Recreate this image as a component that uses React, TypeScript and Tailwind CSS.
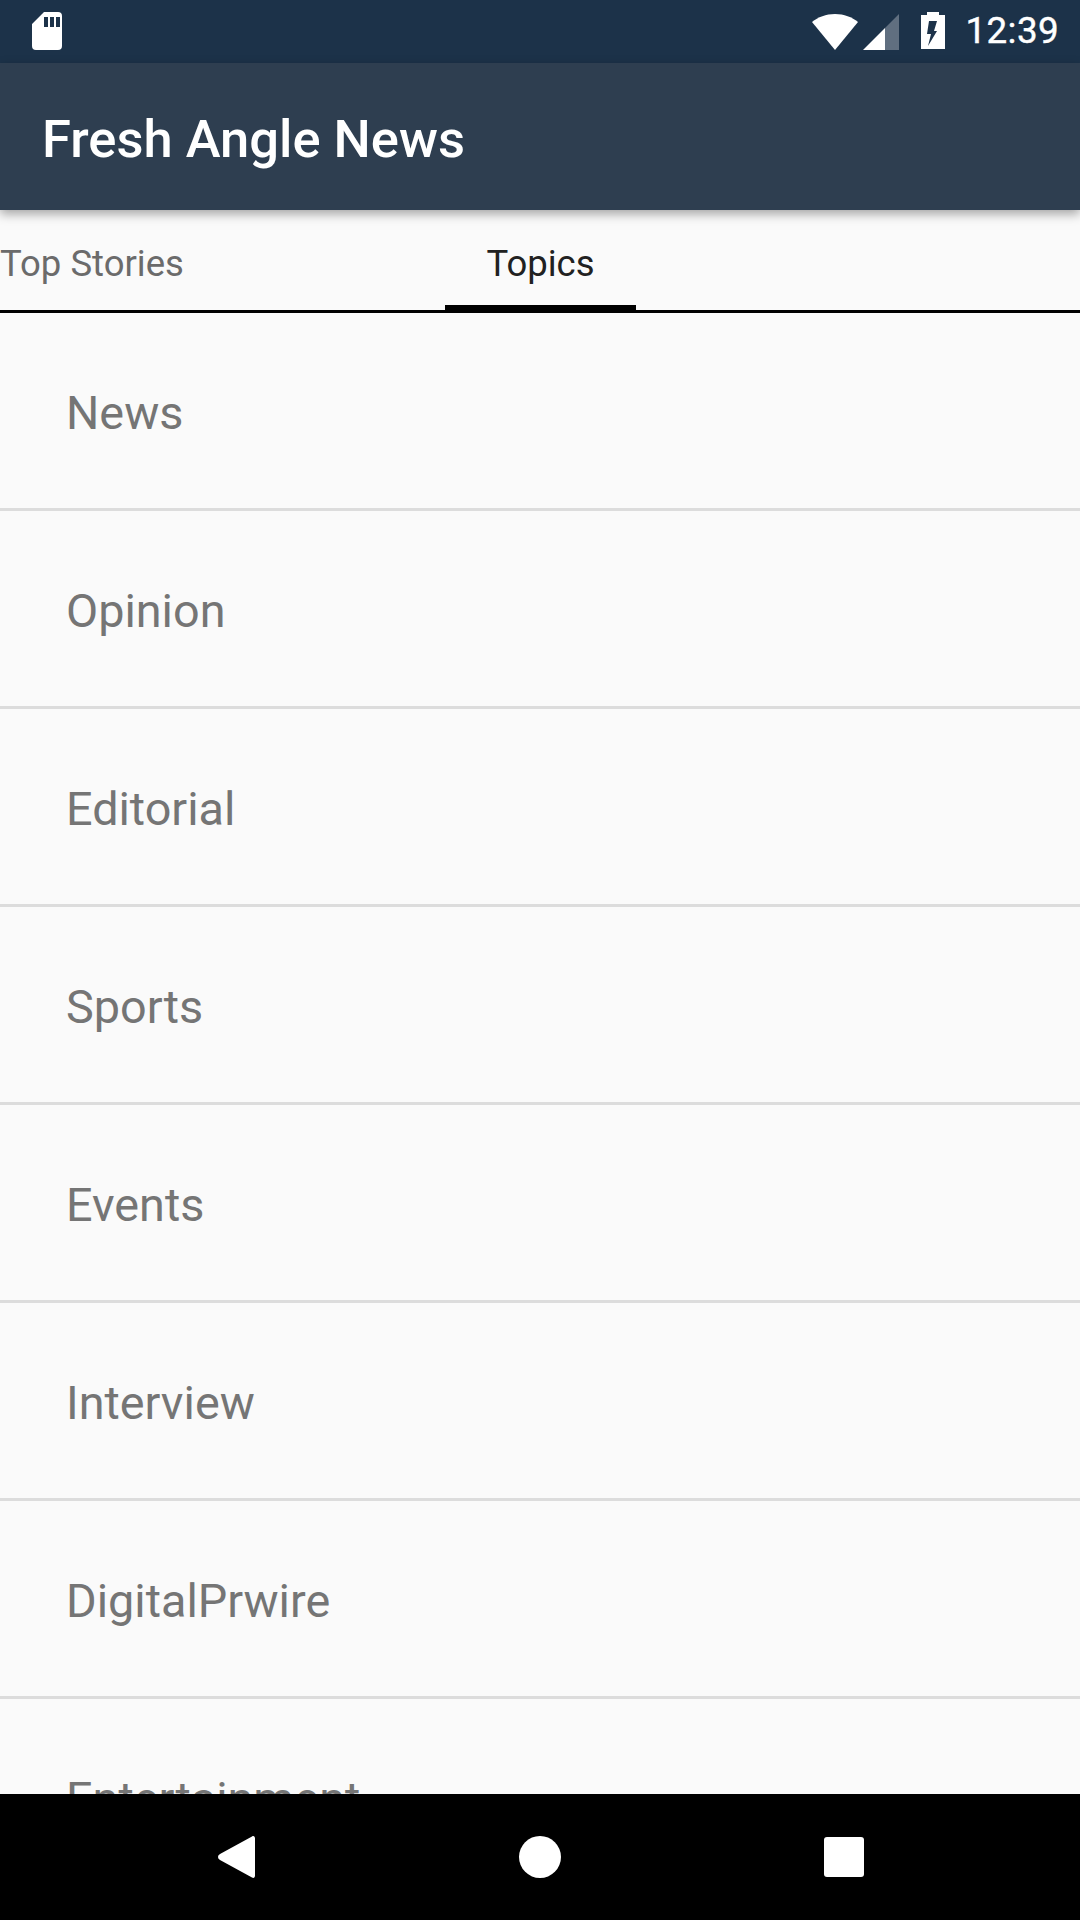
import React from 'react';

const topics = ['News', 'Opinion', 'Editorial', 'Sports', 'Events', 'Interview', 'DigitalPrwire', 'Entertainment'];

function StatusBar() {
  return (
    <div className="flex h-[63px] shrink-0 items-center bg-[#1c3249] pl-[32px] pr-[21px]">
      {/* sd card */}
      <svg width="30" height="38" viewBox="0 0 30 38" className="mb-[1px]">
        <path
          fill="#fff"
          fillRule="evenodd"
          d="M12 0h14a4 4 0 0 1 4 4v30a4 4 0 0 1-4 4H4a4 4 0 0 1-4-4V12zM12 5v10h4V5zM18 5v10h4V5zM24 5v10h4V5z"
        />
      </svg>
      <div className="flex-1" />
      {/* wifi */}
      <svg width="46" height="36" viewBox="0 0 46 36" className="mr-[5px]">
        <path fill="#fff" d="M23 0C14 0 6 3 0 8l23 28L46 8C40 3 32 0 23 0z" />
      </svg>
      {/* signal */}
      <svg width="36" height="36" viewBox="0 0 36 36" className="mr-[22px]">
        <path fill="#fff" fillOpacity="0.3" d="M36 0v36H22V14z" />
        <path fill="#fff" d="M22 14v22H0z" />
      </svg>
      {/* battery */}
      <svg width="24" height="37" viewBox="0 0 24 37" className="mb-[2px] mr-[20px]">
        <path
          fill="#fff"
          fillRule="evenodd"
          d="M6 0h12v3h6v34H0V3h6zM8 9h8l-3 10h3L7 34l3-12H6z"
        />
      </svg>
      <span className="font-['Roboto',sans-serif] text-[36.75px] leading-none tracking-[0.4px] text-white [-webkit-text-stroke:0.4px_white]">12:39</span>
    </div>
  );
}

function NavBar() {
  return (
    <div className="relative flex h-[126px] shrink-0 items-center bg-black">
      <div className="flex w-full items-center">
        <div className="ml-[218px] h-[42px] w-[37px]">
          <svg width="37" height="42" viewBox="0 0 37 42">
            <path
              fill="#fff"
              d="M34 0.5c1.7-1 3 0 3 2v37c0 2-1.3 3-3 2L2 24c-2.6-1.5-2.6-4.5 0-6z"
            />
          </svg>
        </div>
        <div className="ml-[264px] h-[42px] w-[42px] rounded-full bg-white" />
        <div className="ml-[263px] h-[40px] w-[40px] rounded-[3px] bg-white" />
      </div>
    </div>
  );
}

export default function App() {
  return (
    <div className="flex h-[1920px] w-[1080px] flex-col overflow-hidden bg-[#fafafa] font-['Roboto',sans-serif]">
      <StatusBar />

      <header className="relative z-10 flex h-[147px] shrink-0 items-center bg-[#2e3e50] pl-[42px] pt-[5px] shadow-[0_4px_10px_rgba(0,0,0,0.35)]">
        <h1 className="text-[52.5px] font-medium leading-none text-white">Fresh Angle News</h1>
      </header>

      {/* tabs */}
      <div className="relative flex h-[103px] shrink-0 border-b-[3px] border-black">
        <div className="flex w-[445px] items-center pt-[8px] text-[36.5px] leading-none text-[#6b6b6b]">
          <span className="whitespace-nowrap">Top Stories</span>
        </div>
        <div className="flex w-[191px] items-center justify-center border-b-[5px] border-black pt-[13px] text-[36.5px] leading-none text-[#212121]">
          <span>Topics</span>
        </div>
      </div>

      <ul className="min-h-0 flex-1 overflow-hidden">
        {topics.map((topic) => (
          <li
            key={topic}
            className="flex h-[198px] items-center border-b-[3px] border-[#dcdcdc] pl-[66px] pt-[6px] text-[46.75px] leading-none text-[#757575]"
          >
            {topic}
          </li>
        ))}
      </ul>

      <NavBar />
    </div>
  );
}
